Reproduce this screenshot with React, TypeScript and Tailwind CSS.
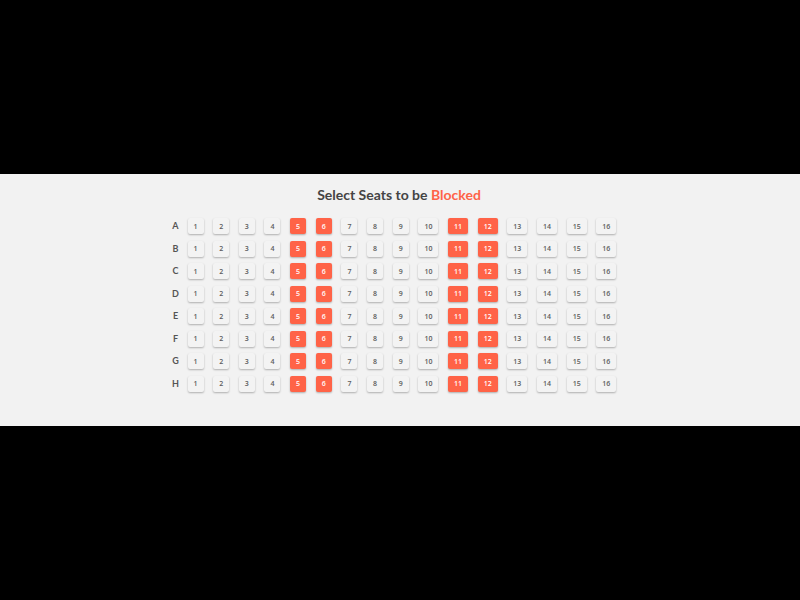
import { useState } from "react";

const ROWS = ["A", "B", "C", "D", "E", "F", "G", "H"];
const SEATS = Array.from({ length: 16 }, (_, i) => i + 1);
const INITIALLY_BLOCKED = [5, 6, 11, 12];

type SeatProps = {
  row: string;
  seat: number;
  blocked: boolean;
  onToggle: () => void;
};

function Seat({ row, seat, blocked, onToggle }: SeatProps) {
  const width = seat < 10 ? "w-4" : "w-5";
  const colour = blocked ? "bg-[#ff6347] text-white" : "bg-[#f3f3f3] text-[#5c5c5c]";
  return (
    <button
      type="button"
      aria-label={`Seat ${row}${seat}`}
      aria-pressed={blocked}
      onClick={onToggle}
      className={`${width} ${colour} flex h-4 shrink-0 cursor-pointer items-center justify-center rounded-[2px] font-['Open_Sans',sans-serif] text-[7px] leading-none font-semibold shadow-[0_1px_2px_rgba(0,0,0,0.28)]`}
    >
      {seat}
    </button>
  );
}

export default function App() {
  const [blocked, setBlocked] = useState<Set<string>>(
    () => new Set(ROWS.flatMap((row) => INITIALLY_BLOCKED.map((seat) => `${row}${seat}`)))
  );

  const toggle = (id: string) => {
    const next = new Set(blocked);
    if (!next.delete(id)) next.add(id);
    setBlocked(next);
  };

  return (
    <div className="flex min-h-screen flex-col justify-center bg-black font-['Lato',sans-serif]">
      <main className="flex flex-col items-center bg-[#f2f2f2] px-4 pt-3 pb-[34px]">
        <h1 className="mr-0.5 text-[14px] leading-[18px] font-bold text-[#444444]">
          Select Seats to be <span className="text-[#ff6347]">Blocked</span>
        </h1>
        <div className="mt-3.5 mr-3 flex h-[174px] w-full max-w-[445px] flex-col justify-between">
          {ROWS.map((row) => (
            <div key={row} className="flex items-center gap-2">
              <span className="w-2 text-center text-[9px] leading-4 font-bold text-[#555555]">{row}</span>
              <div className="flex flex-1 justify-between">
                {SEATS.map((seat) => (
                  <Seat
                    key={seat}
                    row={row}
                    seat={seat}
                    blocked={blocked.has(`${row}${seat}`)}
                    onToggle={() => toggle(`${row}${seat}`)}
                  />
                ))}
              </div>
            </div>
          ))}
        </div>
      </main>
    </div>
  );
}
